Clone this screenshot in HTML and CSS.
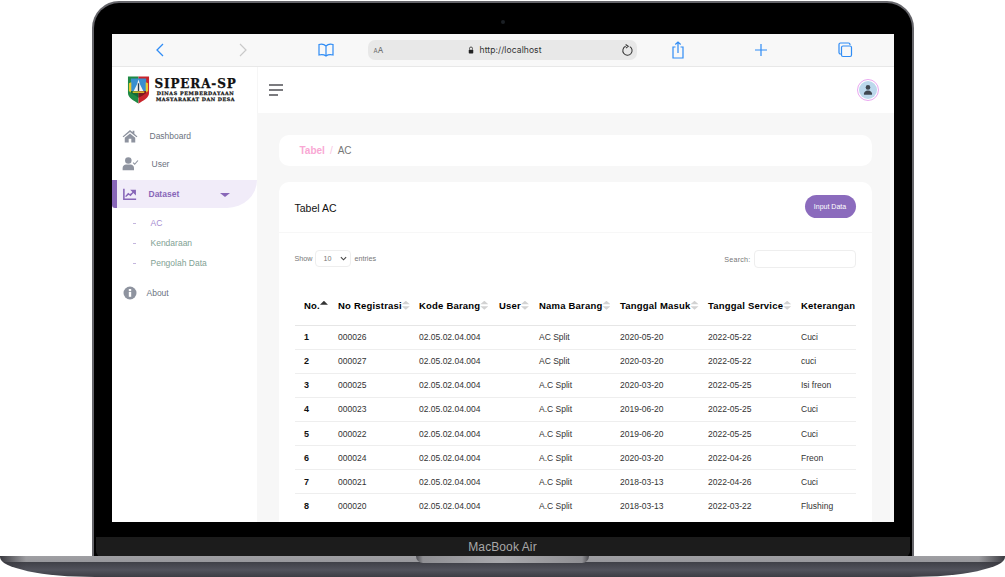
FILE: index.html
```html
<!DOCTYPE html>
<html lang="id">
<head>
<meta charset="utf-8">
<title>SIPERA-SP</title>
<link rel="stylesheet" href="styles.css">
</head>
<body>
<div class="laptop">
  <div class="lid">
    <div class="bezel-top"><span class="camera"></span></div>
    <div class="screen">
      <div class="browser-bar">
        <svg class="bi m-back" viewBox="0 0 20 20"><path d="M13 4l-6 6 6 6" fill="none" stroke="#2f8cf5" stroke-width="1.3"/></svg>
        <svg class="bi m-62" viewBox="0 0 20 20"><path d="M8 4l6 6-6 6" fill="none" stroke="#c9c9c9" stroke-width="1.2"/></svg>
        <svg class="bi m-64" viewBox="0 0 20 20"><path d="M10 6C8 4 5 4 3 4.500V15c2-.5 5-.5 7 1 2-1.500 5-1.500 7-1V4.500C15 4 12 4 10 6zM10 6v10" fill="none" stroke="#2f8cf5" stroke-width="1.200"/></svg>
        <div class="url-bar">
          <span class="aa"><small>A</small>A</span>
          <span class="url"><svg class="lock" viewBox="0 0 8 10"><path d="M2 4.500V3a2 2 0 0 1 4 0v1.500" fill="none" stroke="#222" stroke-width="1"/><rect x="1" y="4.500" width="6" height="5" rx="1" fill="#222"/></svg><span>http://localhost</span></span>
          <svg class="reload" viewBox="0 0 14 14"><path d="M9.500 2.800A5 5 0 1 1 5 2.500M5 .5l2.800 2L5.300 4.500" fill="none" stroke="#333" stroke-width="1.100"/></svg>
        </div>
        <svg class="bi m-31" viewBox="0 0 20 20"><path d="M7.500 7H5v11h10V7h-2.500M10 13V2M7.300 4.500L10 2l2.700 2.500" fill="none" stroke="#2f8cf5" stroke-width="1.200"/></svg>
        <svg class="bi m-63" viewBox="0 0 20 20"><path d="M4 10h12M10 4v12" fill="none" stroke="#2f8cf5" stroke-width="1.200"/></svg>
        <svg class="bi m-64" viewBox="0 0 20 20"><path d="M15 5V4.500A1.500 1.500 0 0 0 13.500 3h-8A1.500 1.500 0 0 0 4 4.500v8A1.500 1.500 0 0 0 5.500 14H6" fill="none" stroke="#2f8cf5" stroke-width="1.200"/><rect x="6.500" y="6" width="10" height="10.500" rx="1.500" fill="none" stroke="#2f8cf5" stroke-width="1.200"/></svg>
      </div>
      <div class="app">
        <aside class="sidebar">
          <div class="brand">
            <svg class="shield" viewBox="0 0 24 30">
              <path d="M1 1h11v28C7 26 1 23 1 18z" fill="#1f8a45"/>
              <path d="M12 1h11v17c0 5-6 8-11 11z" fill="#c8242c"/>
              <path d="M4 3h16v13H4z" fill="#3a8fd0"/>
              <path d="M12 4l1.500 5 3.500 7H7l3.500-7z" fill="#f4f4f4"/>
              <path d="M11.300 8h1.400v8h-1.400z" fill="#26384f"/>
              <path d="M2 8l2.500-1v11L2 16zM22 8l-2.500-1v11l2.500-2z" fill="#e9c92f"/>
              <path d="M4 16h8v7l-3-2-5-3z" fill="#166a34"/>
              <path d="M12 16h8v2l-4 3-4 2z" fill="#7d1a20"/>
              <path d="M6 16.500h12v1.500H6z" fill="#e9c92f"/>
            </svg>
            <div class="brand-text">
              <div class="brand-name">SIPERA-SP</div>
              <div class="brand-sub">DINAS PEMBERDAYAAN</div>
              <div class="brand-sub wide">MASYARAKAT DAN DESA</div>
            </div>
          </div>
          <nav class="nav">
            <a class="nav-item item-dash">
              <svg class="nav-icon" viewBox="0 0 18 16"><path d="M9 1L.5 8.500l1 1L9 3.500l7.500 6 1-1L14 5.500V2h-2v1.800zM3 10v5.500h4.500V11h3v4.500H15V10L9 5z" fill="#8e939f"/></svg>
              <span>Dashboard</span>
            </a>
            <a class="nav-item item-user">
              <svg class="nav-icon wide-icon" viewBox="0 0 18 16"><circle cx="6.500" cy="4" r="3.700" fill="#8e939f"/><path d="M0 15v-2.500C0 10 2 8.500 4 8.500h5c2 0 4 1.500 4 4V15z" fill="#8e939f"/><path d="M12 6.500l1.800 1.800L17.500 4" fill="none" stroke="#8e939f" stroke-width="1.300"/></svg>
              <span>User</span>
            </a>
            <a class="nav-item active">
              <svg class="nav-icon" viewBox="0 0 16 14"><path d="M1 1v12h14" fill="none" stroke="#8866b8" stroke-width="1.800"/><path d="M3 10l3-3.500 2.500 2L12.500 4M10 3h4v4z" fill="#8866b8" stroke="#8866b8" stroke-width="1.500"/></svg>
              <span>Dataset</span>
              <i class="caret"></i>
            </a>
            <ul class="subnav">
              <li class="sub-first">AC</li>
              <li>Kendaraan</li>
              <li>Pengolah Data</li>
            </ul>
            <a class="nav-item item-about">
              <svg class="nav-icon round-icon" viewBox="0 0 14 14"><circle cx="7" cy="7" r="6.500" fill="#8e939f"/><rect x="5.800" y="5.800" width="2.400" height="5" fill="#fff"/><rect x="5.800" y="3" width="2.400" height="2" fill="#fff"/></svg>
              <span>About</span>
            </a>
          </nav>
        </aside>
        <div class="content">
          <header class="topbar">
            <div class="burger"><i></i><i></i><i class="short"></i></div>
            <div class="avatar">
              <svg viewBox="0 0 14 14"><circle cx="7" cy="4" r="2.700" fill="#3f4750"/><path d="M2 12.500c0-3 2-5 5-5s5 2 5 5z" fill="#3f4750"/></svg>
            </div>
          </header>
          <main class="main">
            <div class="crumb"><b>Tabel</b><span class="sep">/</span><span>AC</span></div>
            <section class="card">
              <div class="card-head">
                <h2>Tabel AC</h2>
                <button class="btn">Input Data</button>
              </div>
              <div class="card-body">
                <div class="tools">
                  <label class="show">Show <span class="select">10<svg viewBox="0 0 8 5"><path d="M1 1l3 3 3-3" fill="none" stroke="#444" stroke-width="1.300"/></svg></span> entries</label>
                  <label class="search">Search: <span class="input"></span></label>
                </div>
                <div class="table-wrap">
                  <table>
                    <colgroup><col class="c1"><col class="c2"><col class="c3"><col class="c4"><col class="c5"><col class="c6"><col class="c7"><col class="c8"></colgroup>
                    <thead>
                      <tr>
                        <th class="sorted">No.</th>
                        <th>No Registrasi</th>
                        <th>Kode Barang</th>
                        <th>User</th>
                        <th>Nama Barang</th>
                        <th>Tanggal Masuk</th>
                        <th>Tanggal Service</th>
                        <th>Keterangan</th>
                      </tr>
                    </thead>
                    <tbody>
                      <tr><td>1</td><td>000026</td><td>02.05.02.04.004</td><td></td><td>AC Split</td><td>2020-05-20</td><td>2022-05-22</td><td>Cuci</td></tr>
                      <tr><td>2</td><td>000027</td><td>02.05.02.04.004</td><td></td><td>AC Split</td><td>2020-03-20</td><td>2022-05-22</td><td>cuci</td></tr>
                      <tr><td>3</td><td>000025</td><td>02.05.02.04.004</td><td></td><td>A.C Split</td><td>2020-03-20</td><td>2022-05-25</td><td>Isi freon</td></tr>
                      <tr><td>4</td><td>000023</td><td>02.05.02.04.004</td><td></td><td>A.C Split</td><td>2019-06-20</td><td>2022-05-25</td><td>Cuci</td></tr>
                      <tr><td>5</td><td>000022</td><td>02.05.02.04.004</td><td></td><td>A.C Split</td><td>2019-06-20</td><td>2022-05-25</td><td>Cuci</td></tr>
                      <tr><td>6</td><td>000024</td><td>02.05.02.04.004</td><td></td><td>A.C Split</td><td>2020-03-20</td><td>2022-04-26</td><td>Freon</td></tr>
                      <tr><td>7</td><td>000021</td><td>02.05.02.04.004</td><td></td><td>A.C Split</td><td>2018-03-13</td><td>2022-04-26</td><td>Cuci</td></tr>
                      <tr><td>8</td><td>000020</td><td>02.05.02.04.004</td><td></td><td>A.C Split</td><td>2018-03-13</td><td>2022-03-22</td><td>Flushing</td></tr>
                    </tbody>
                  </table>
                </div>
              </div>
            </section>
          </main>
        </div>
      </div>
    </div>
    <div class="bezel-bottom"></div>
    <div class="chin">MacBook Air</div>
  </div>
  <div class="base"><div class="notch"></div></div>
</div>
</body>
</html>
```

FILE: styles.css
```css
* { box-sizing: border-box; }
html, body { margin: 0; padding: 0; background: #fff; }
body { width: 1005px; height: 577px; overflow: hidden; font-family: "Liberation Sans", Arial, sans-serif; }

.laptop { display: flex; flex-direction: column; align-items: center; padding-top: 1px; }
.lid {
  width: 822px; height: 555px; background: #000; border: 2px solid #66666b; border-bottom: 0;
  border-radius: 27px 27px 0 0; padding: 0 18px; display: flex; flex-direction: column;
}
.bezel-top { height: 31px; display: flex; justify-content: center; padding-top: 17px; flex: none; }
.camera { width: 4px; height: 4px; border-radius: 50%; background: #1b1f24; }
.screen { height: 488px; flex: none; background: #fff; display: flex; flex-direction: column; overflow: hidden; }
.bezel-bottom { height: 15px; flex: none; }
.chin {
  flex: 1; background: #1c1c1c; margin: 0 -16px; border-radius: 0 0 6px 6px;
  color: #a8a8a8; font-size: 12px; text-align: center; line-height: 20px; letter-spacing: .1px;
}

.base {
  width: 1005px; height: 21px; flex: none; display: flex; justify-content: center;
  background:
    linear-gradient(90deg, #3a3a40 0, rgba(58,58,64,0) 26px, rgba(58,58,64,0) 979px, #3a3a40 100%),
    linear-gradient(#9f9fa3 0, #98989c 6px, #3f4047 6px, #52535c 14px, #3c3d44 21px);
  border-radius: 0 0 95px 95px / 0 0 20px 20px;
}
.notch {
  width: 173px; height: 7px; border-radius: 0 0 7px 7px;
  background: linear-gradient(90deg, #4d4d52 0, #8f8f93 4%, #a8a8ac 50%, #8f8f93 96%, #4d4d52 100%);
}

.browser-bar {
  height: 33px; flex: none; background: #f8f8f8; border-bottom: 1px solid #e8e8e8;
  display: flex; align-items: center;
}
.bi { width: 20px; height: 20px; flex: none; }
.m-back { margin-left: 38px; }
.m-62 { margin-left: 62px; }
.m-64 { margin-left: 64px; }
.m-63 { margin-left: 63px; }
.m-31 { margin-left: 31px; }
.url-bar {
  width: 269px; height: 20px; margin-left: 32px; background: #e8e8e8; border-radius: 7px; flex: none;
  display: flex; align-items: center; padding: 0 3px 0 6px; color: #333; font-size: 9px;
}
.aa { width: 94px; color: #666; font-family: "Inter", sans-serif; font-size: 8px; flex: none; }
.aa small { font-size: 6px; }
.url { flex: 1; display: flex; align-items: center; gap: 6px; font-family: "Inter", sans-serif; font-size: 8.500px; letter-spacing: .1px; color: #333; }
.lock { width: 6px; height: 8px; }
.reload { width: 13px; height: 13px; flex: none; }

.app { flex: 1; display: flex; min-height: 0; }
.sidebar { width: 145px; flex: none; background: #fff; display: flex; flex-direction: column; }
.brand { height: 46px; flex: none; display: flex; align-items: center; padding: 0 0 0 15px; gap: 5px; }
.shield { width: 23px; height: 30px; flex: none; }
.brand-text { color: #111; font-family: "DejaVu Serif", serif; font-weight: 700; -webkit-text-stroke: .25px #111; }
.brand-name { font-size: 12px; line-height: 13px; letter-spacing: .85px; white-space: nowrap; }
.brand-sub { font-size: 4.800px; line-height: 5.500px; text-align: center; letter-spacing: .62px; white-space: nowrap; }
.brand-sub.wide { letter-spacing: .55px; }

.nav { display: flex; flex-direction: column; padding-top: 9px; }
.nav-item {
  height: 28px; display: flex; align-items: center; color: #6c7280; font-size: 8.500px; padding-left: 10px;
}
.nav-icon { width: 16px; height: 14px; flex: none; margin-right: 12px; }
.wide-icon { width: 17px; margin-right: 13px; }
.round-icon { width: 14px; margin-left: 1px; margin-right: 10px; }
.active {
  background: #f1ecf9; color: #8866b8; font-weight: 700; margin-top: 2px; border-left: 5px solid #8866b8;
  border-radius: 0 0 30px 3px / 0 0 28px 3px; padding-left: 6px; font-size: 8.500px;
}
.active .nav-icon { width: 14px; margin-right: 12px; }
.caret { width: 0; height: 0; border: 5px solid transparent; border-top: 4px solid #8866b8; border-bottom: 0; margin-left: 41px; margin-top: 2px; }
.subnav { list-style: none; margin: 0; padding: 5px 0 0 21px; display: flex; flex-direction: column; }
.subnav li { height: 20px; display: flex; align-items: center; font-size: 8.500px; color: #7fa194; }
.subnav li::before { content: ""; width: 3px; height: 1px; background: #c4b6de; margin-right: 15px; }
.subnav .sub-first { color: #a58bd0; }
.item-about { margin-top: 6px; }

.content { flex: 1; min-width: 0; display: flex; flex-direction: column; }
.topbar { height: 46px; flex: none; background: #fff; display: flex; align-items: center; justify-content: space-between; padding: 0 15px 0 11px; border-left: 1px solid #f6f6f6; }
.burger { display: flex; flex-direction: column; gap: 3px; width: 14px; }
.burger i { display: block; height: 2px; background: #7b7b7f; }
.burger .short { width: 9px; }
.avatar { width: 22px; height: 22px; border-radius: 50%; border: 1.5px solid #eaa8f0; padding: 1px; background: #fff; display: flex; }
.avatar svg { width: 100%; height: 100%; border-radius: 50%; background: #bcd8ec; padding: 3px; }

.main { flex: 1; min-height: 0; background: #f7f7f7; padding: 22px 22px 0; display: flex; flex-direction: column; gap: 16px; overflow: hidden; }
.crumb { height: 31px; flex: none; background: #fff; border-radius: 10px; display: flex; align-items: center; padding-left: 21px; font-size: 10px; color: #777; }
.crumb b { color: #f9a8d4; }
.sep { margin: 0 5px; color: #f9c6e2; }
.card { flex: 1; background: #fff; border-radius: 10px 10px 0 0; }
.card-head { height: 51px; padding: 13px 16px 0; border-bottom: 1px solid #f7f7f7; display: flex; align-items: flex-start; justify-content: space-between; }
.card-head h2 { margin: 0; font-size: 10.500px; font-weight: 400; color: #111; line-height: 26px; }
.btn { width: 51px; height: 23px; border: 0; border-radius: 12px; background: #8b6bbd; color: #fff; font: 400 7px "Liberation Sans", sans-serif; padding: 0; }
.card-body { padding: 17px 16px 0; }
.tools { height: 18px; display: flex; align-items: flex-start; justify-content: space-between; font-size: 7.200px; color: #777; }
.show, .search { display: flex; align-items: center; gap: 3px; height: 17px; }
.select { width: 36px; height: 17px; border: 1px solid #eee; border-radius: 4px; display: flex; align-items: center; justify-content: space-between; padding: 0 3px 0 7px; }
.select svg { width: 7px; height: 5px; }
.search { letter-spacing: .2px; height: 18px; }
.input { width: 102px; height: 18px; border: 1px solid #eee; border-radius: 4px; background: #fff; }

.table-wrap { overflow: hidden; margin-top: 16px; width: 561px; }
table { border-collapse: collapse; table-layout: fixed; width: 600px; }
.c1 { width: 34px; } .c2 { width: 81px; } .c3 { width: 80px; } .c4 { width: 40px; }
.c5 { width: 81px; } .c6 { width: 88px; } .c7 { width: 93px; } .c8 { width: 103px; }
th {
  height: 41px; padding: 2px 0 0 9.500px; text-align: left; font-size: 9.500px; color: #000;
  border-bottom: 1px solid #e6e6e6; white-space: nowrap; letter-spacing: .2px;
}
th::after {
  content: ""; display: inline-block; width: 8px; height: 9px; vertical-align: -1px;
  background-color: #d2d2d2;
  clip-path: polygon(50% 0, 100% 40%, 0 40%, 0 60%, 100% 60%, 50% 100%, 0 60%, 0 40%);
}
th.sorted::after {
  background-color: #333; height: 4px; vertical-align: 4px;
  clip-path: polygon(50% 0, 100% 100%, 0 100%);
}
th:last-child::after { display: none; }
td { height: 24.150px; padding: 0 0 0 9.500px; font-size: 8.500px; color: #333; border-bottom: 1px solid #eee; white-space: nowrap; }
td:first-child { font-weight: 700; color: #111; font-size: 9px; }
tr:last-child td { border-bottom: 0; }
```
